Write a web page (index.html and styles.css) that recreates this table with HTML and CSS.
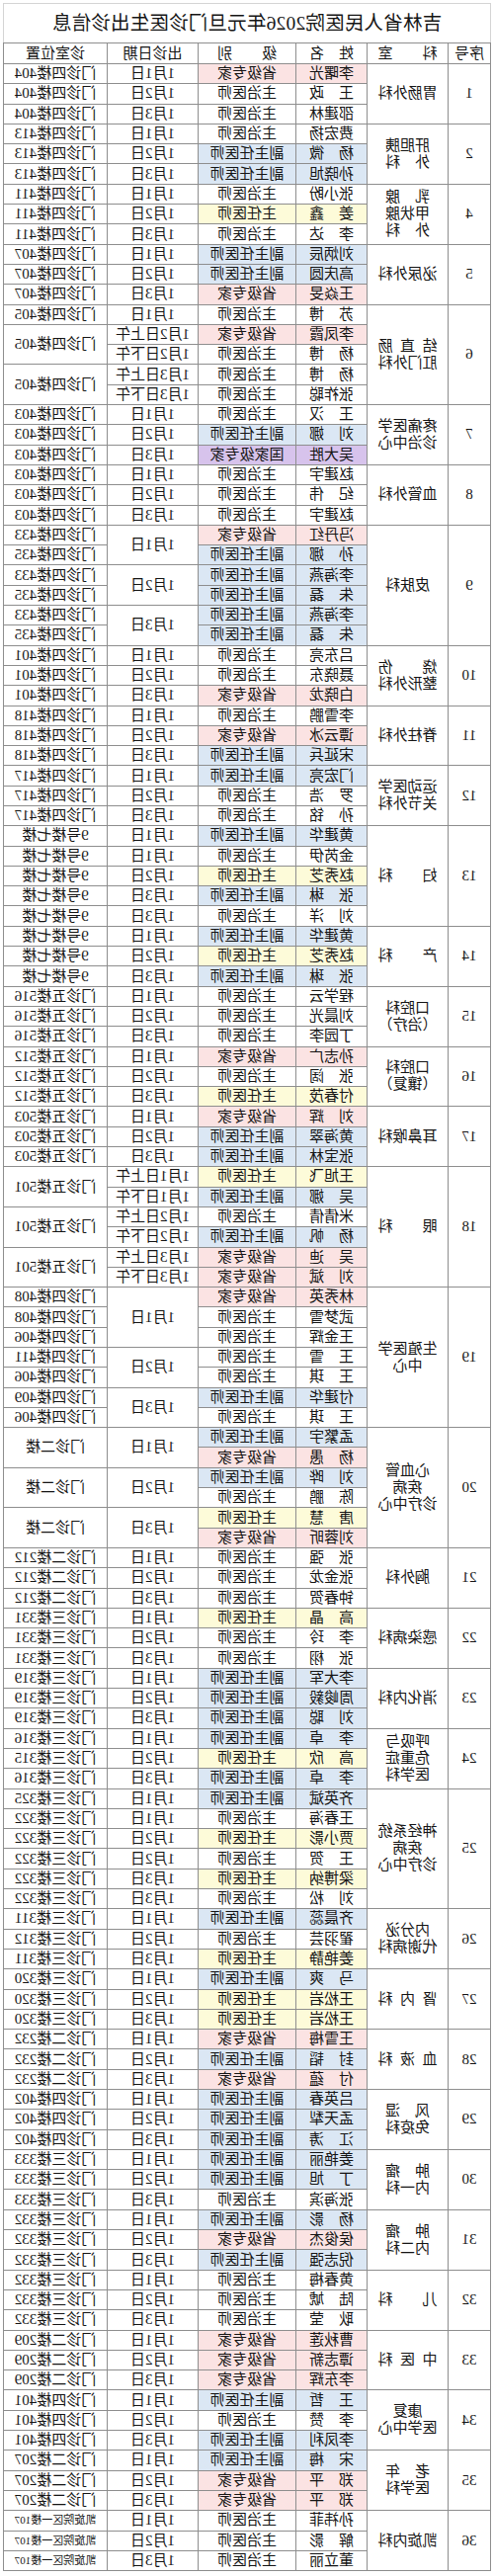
FILE: index.html
```html
<!DOCTYPE html>
<html lang="zh-CN">
<head>
<meta charset="utf-8">
<title>吉林省人民医院2026年元旦门诊医生出诊信息</title>
<link rel="stylesheet" href="styles.css">
</head>
<body>
<div class="sheet">
<table class="grid">
<colgroup><col class="c1"><col class="c2"><col class="c3"><col class="c4"><col class="c5"><col class="c6"></colgroup>
<thead>
<tr class="title"><td colspan="6">吉林省人民医院2026年元旦门诊医生出诊信息</td></tr>
<tr class="head"><th>序号</th><th>科　　室</th><th>姓　名</th><th>级　　别</th><th>出诊日期</th><th>诊室位置</th></tr>
</thead>
<tbody>
<tr><td class="no" rowspan="3">1</td><td class="dept" rowspan="3">胃肠外科</td><td class="p">李曙光</td><td class="p">省级专家</td><td>1月1日</td><td>门诊四楼404</td></tr>
<tr><td>王　政</td><td>主治医师</td><td>1月2日</td><td>门诊四楼404</td></tr>
<tr><td>邵建林</td><td>主治医师</td><td>1月3日</td><td>门诊四楼404</td></tr>

<tr><td class="no" rowspan="3">2</td><td class="dept" rowspan="3">肝胆胰<br>外　科</td><td>费宏扬</td><td>主治医师</td><td>1月1日</td><td>门诊四楼413</td></tr>
<tr><td class="b">杨　微</td><td class="b">副主任医师</td><td>1月2日</td><td>门诊四楼413</td></tr>
<tr><td class="b">孙晓旭</td><td class="b">副主任医师</td><td>1月3日</td><td>门诊四楼413</td></tr>

<tr><td class="no" rowspan="3">4</td><td class="dept" rowspan="3">乳　腺<br>甲状腺<br>外　科</td><td>张小盼</td><td>主治医师</td><td>1月1日</td><td>门诊四楼411</td></tr>
<tr><td class="y">姜　鑫</td><td class="y">主任医师</td><td>1月2日</td><td>门诊四楼411</td></tr>
<tr><td>李　达</td><td>主治医师</td><td>1月3日</td><td>门诊四楼411</td></tr>

<tr><td class="no" rowspan="3">5</td><td class="dept" rowspan="3">泌尿外科</td><td class="b">刘炳辰</td><td class="b">副主任医师</td><td>1月1日</td><td>门诊四楼407</td></tr>
<tr><td class="b">高庆圆</td><td class="b">副主任医师</td><td>1月2日</td><td>门诊四楼407</td></tr>
<tr><td class="p">王焱旻</td><td class="p">省级专家</td><td>1月3日</td><td>门诊四楼407</td></tr>

<tr><td class="no" rowspan="5">6</td><td class="dept" rowspan="5">结&ensp;直&ensp;肠<br>肛门外科</td><td>苏　博</td><td>主治医师</td><td>1月1日</td><td>门诊四楼405</td></tr>
<tr><td class="p">李凤霞</td><td class="p">省级专家</td><td>1月2日上午</td><td rowspan="2">门诊四楼405</td></tr>
<tr><td>杨　博</td><td>主治医师</td><td>1月2日下午</td></tr>
<tr><td>杨　博</td><td>主治医师</td><td>1月3日上午</td><td rowspan="2">门诊四楼405</td></tr>
<tr><td>张祚聪</td><td>主治医师</td><td>1月3日下午</td></tr>

<tr><td class="no" rowspan="3">7</td><td class="dept" rowspan="3">疼痛医学<br>诊治中心</td><td>王　汉</td><td>主治医师</td><td>1月1日</td><td>门诊四楼403</td></tr>
<tr><td class="b">刘　娜</td><td class="b">副主任医师</td><td>1月2日</td><td>门诊四楼403</td></tr>
<tr><td class="v">吴大胜</td><td class="v">国家级专家</td><td>1月3日</td><td>门诊四楼403</td></tr>

<tr><td class="no" rowspan="3">8</td><td class="dept" rowspan="3">血管外科</td><td>赵建宇</td><td>主治医师</td><td>1月1日</td><td>门诊四楼403</td></tr>
<tr><td>纪　伟</td><td>主治医师</td><td>1月2日</td><td>门诊四楼403</td></tr>
<tr><td>赵建宇</td><td>主治医师</td><td>1月3日</td><td>门诊四楼403</td></tr>

<tr><td class="no" rowspan="6">9</td><td class="dept" rowspan="6">皮肤科</td><td class="p">冯丹红</td><td class="p">省级专家</td><td rowspan="2">1月1日</td><td>门诊四楼433</td></tr>
<tr><td class="b">孙　娜</td><td class="b">副主任医师</td><td>门诊四楼435</td></tr>
<tr><td class="b">李海燕</td><td class="b">副主任医师</td><td rowspan="2">1月2日</td><td>门诊四楼433</td></tr>
<tr><td class="b">朱　磊</td><td class="b">副主任医师</td><td>门诊四楼435</td></tr>
<tr><td class="b">李海燕</td><td class="b">副主任医师</td><td rowspan="2">1月3日</td><td>门诊四楼433</td></tr>
<tr><td class="b">朱　磊</td><td class="b">副主任医师</td><td>门诊四楼435</td></tr>

<tr><td class="no" rowspan="3">10</td><td class="dept" rowspan="3">烧　　伤<br>整形外科</td><td>吕东亮</td><td>主治医师</td><td>1月1日</td><td>门诊四楼401</td></tr>
<tr><td>聂晓东</td><td>主治医师</td><td>1月2日</td><td>门诊四楼401</td></tr>
<tr><td class="p">白晓龙</td><td class="p">省级专家</td><td>1月3日</td><td>门诊四楼401</td></tr>

<tr><td class="no" rowspan="3">11</td><td class="dept" rowspan="3">脊柱外科</td><td>李雪鹏</td><td>主治医师</td><td>1月1日</td><td>门诊四楼418</td></tr>
<tr><td class="p">谭云冰</td><td class="p">省级专家</td><td>1月2日</td><td>门诊四楼418</td></tr>
<tr><td class="b">宋延兵</td><td class="b">副主任医师</td><td>1月3日</td><td>门诊四楼418</td></tr>

<tr><td class="no" rowspan="3">12</td><td class="dept" rowspan="3">运动医学<br>关节外科</td><td class="b">门宏亮</td><td class="b">副主任医师</td><td>1月1日</td><td>门诊四楼417</td></tr>
<tr><td>罗　浩</td><td>主治医师</td><td>1月2日</td><td>门诊四楼417</td></tr>
<tr><td>孙　铭</td><td>主治医师</td><td>1月3日</td><td>门诊四楼417</td></tr>

<tr><td class="no" rowspan="5">13</td><td class="dept" rowspan="5">妇　　科</td><td class="b">黄建华</td><td class="b">副主任医师</td><td>1月1日</td><td>9号楼七楼</td></tr>
<tr><td>金芮伊</td><td>主治医师</td><td>1月1日</td><td>9号楼七楼</td></tr>
<tr><td class="y">赵秀芝</td><td class="y">主任医师</td><td>1月2日</td><td>9号楼七楼</td></tr>
<tr><td class="b">张　琳</td><td class="b">副主任医师</td><td>1月3日</td><td>9号楼七楼</td></tr>
<tr><td>刘　洋</td><td>主治医师</td><td>1月3日</td><td>9号楼七楼</td></tr>

<tr><td class="no" rowspan="3">14</td><td class="dept" rowspan="3">产　　科</td><td class="b">黄建华</td><td class="b">副主任医师</td><td>1月1日</td><td>9号楼七楼</td></tr>
<tr><td class="y">赵秀芝</td><td class="y">主任医师</td><td>1月2日</td><td>9号楼七楼</td></tr>
<tr><td class="b">张　琳</td><td class="b">副主任医师</td><td>1月3日</td><td>9号楼七楼</td></tr>

<tr><td class="no" rowspan="3">15</td><td class="dept" rowspan="3">口腔科<br>（治疗）</td><td>程学云</td><td>主治医师</td><td>1月1日</td><td>门诊五楼516</td></tr>
<tr><td>刘晨光</td><td>主治医师</td><td>1月2日</td><td>门诊五楼516</td></tr>
<tr><td>丁园李</td><td>主治医师</td><td>1月3日</td><td>门诊五楼516</td></tr>

<tr><td class="no" rowspan="3">16</td><td class="dept" rowspan="3">口腔科<br>（镶复）</td><td class="p">孙志广</td><td class="p">省级专家</td><td>1月1日</td><td>门诊五楼512</td></tr>
<tr><td>张　阔</td><td>主治医师</td><td>1月2日</td><td>门诊五楼512</td></tr>
<tr><td class="y">付春茂</td><td class="y">主任医师</td><td>1月3日</td><td>门诊五楼512</td></tr>

<tr><td class="no" rowspan="3">17</td><td class="dept" rowspan="3">耳鼻喉科</td><td class="p">刘　辉</td><td class="p">省级专家</td><td>1月1日</td><td>门诊五楼503</td></tr>
<tr><td class="b">黄海翠</td><td class="b">副主任医师</td><td>1月2日</td><td>门诊五楼503</td></tr>
<tr><td class="b">张宝林</td><td class="b">副主任医师</td><td>1月3日</td><td>门诊五楼503</td></tr>

<tr><td class="no" rowspan="6">18</td><td class="dept" rowspan="6">眼　　科</td><td class="y">王旭飞</td><td class="y">主任医师</td><td>1月1日上午</td><td rowspan="2">门诊五楼501</td></tr>
<tr><td class="b">吴　娜</td><td class="b">副主任医师</td><td>1月1日下午</td></tr>
<tr><td>米倩倩</td><td>主治医师</td><td>1月2日上午</td><td rowspan="2">门诊五楼501</td></tr>
<tr><td class="b">杨　帆</td><td class="b">副主任医师</td><td>1月2日下午</td></tr>
<tr><td class="p">吴　迪</td><td class="p">省级专家</td><td>1月3日上午</td><td rowspan="2">门诊五楼501</td></tr>
<tr><td class="p">刘　斌</td><td class="p">省级专家</td><td>1月3日下午</td></tr>

<tr><td class="no" rowspan="7">19</td><td class="dept" rowspan="7">生殖医学<br>中心</td><td class="p">林秀英</td><td class="p">省级专家</td><td rowspan="3">1月1日</td><td>门诊四楼408</td></tr>
<tr><td>武梦雪</td><td>主治医师</td><td>门诊四楼408</td></tr>
<tr><td>王金辉</td><td>主治医师</td><td>门诊四楼406</td></tr>
<tr><td>王　雪</td><td>主治医师</td><td rowspan="2">1月2日</td><td>门诊四楼411</td></tr>
<tr><td>王　琪</td><td>主治医师</td><td>门诊四楼406</td></tr>
<tr><td class="b">付建华</td><td class="b">副主任医师</td><td rowspan="2">1月3日</td><td>门诊四楼409</td></tr>
<tr><td>王　琪</td><td>主治医师</td><td>门诊四楼406</td></tr>

<tr><td class="no" rowspan="6">20</td><td class="dept" rowspan="6">心血管<br>疾病<br>诊疗中心</td><td class="b">孟繁宇</td><td class="b">副主任医师</td><td rowspan="2">1月1日</td><td rowspan="2">门诊二楼</td></tr>
<tr><td class="p">杨　愚</td><td class="p">省级专家</td></tr>
<tr><td class="b">刘　晔</td><td class="b">副主任医师</td><td rowspan="2">1月2日</td><td rowspan="2">门诊二楼</td></tr>
<tr><td>陈　鹏</td><td>主治医师</td></tr>
<tr><td class="y">唐　慧</td><td class="y">主任医师</td><td rowspan="2">1月3日</td><td rowspan="2">门诊二楼</td></tr>
<tr><td class="p">刘蓉昕</td><td class="p">省级专家</td></tr>

<tr><td class="no" rowspan="3">21</td><td class="dept" rowspan="3">胸外科</td><td>张　强</td><td>主治医师</td><td>1月1日</td><td>门诊二楼212</td></tr>
<tr><td>张金龙</td><td>主治医师</td><td>1月2日</td><td>门诊二楼212</td></tr>
<tr><td>钟春贺</td><td>主治医师</td><td>1月3日</td><td>门诊二楼212</td></tr>

<tr><td class="no" rowspan="3">22</td><td class="dept" rowspan="3">感染病科</td><td class="y">高　晶</td><td class="y">主任医师</td><td>1月1日</td><td>门诊三楼331</td></tr>
<tr><td>李　玲</td><td>主治医师</td><td>1月2日</td><td>门诊三楼331</td></tr>
<tr><td>张　栩</td><td>主治医师</td><td>1月3日</td><td>门诊三楼331</td></tr>

<tr><td class="no" rowspan="3">23</td><td class="dept" rowspan="3">消化内科</td><td class="b">李大军</td><td class="b">副主任医师</td><td>1月1日</td><td>门诊三楼319</td></tr>
<tr><td class="b">周峻毅</td><td class="b">副主任医师</td><td>1月2日</td><td>门诊三楼319</td></tr>
<tr><td class="b">刘　聪</td><td class="b">副主任医师</td><td>1月3日</td><td>门诊三楼319</td></tr>

<tr><td class="no" rowspan="3">24</td><td class="dept" rowspan="3">呼吸与<br>危重症<br>医学科</td><td class="b">李　卓</td><td class="b">副主任医师</td><td>1月1日</td><td>门诊三楼316</td></tr>
<tr><td class="y">高　欣</td><td class="y">主任医师</td><td>1月2日</td><td>门诊三楼315</td></tr>
<tr><td class="b">李　卓</td><td class="b">副主任医师</td><td>1月3日</td><td>门诊三楼316</td></tr>

<tr><td class="no" rowspan="6">25</td><td class="dept" rowspan="6">神经系统<br>疾病<br>诊疗中心</td><td class="b">齐英斌</td><td class="b">副主任医师</td><td>1月1日</td><td>门诊三楼325</td></tr>
<tr><td>王春海</td><td>主治医师</td><td>1月1日</td><td>门诊三楼322</td></tr>
<tr><td class="y">贾小影</td><td class="y">主任医师</td><td>1月2日</td><td>门诊三楼322</td></tr>
<tr><td>王　贺</td><td>主治医师</td><td>1月2日</td><td>门诊三楼322</td></tr>
<tr><td class="y">梁博纳</td><td class="y">主任医师</td><td>1月3日</td><td>门诊三楼322</td></tr>
<tr><td>刘　松</td><td>主治医师</td><td>1月3日</td><td>门诊三楼322</td></tr>

<tr><td class="no" rowspan="3">26</td><td class="dept" rowspan="3">内分泌<br>代谢病科</td><td class="b">齐晨蕊</td><td class="b">副主任医师</td><td>1月1日</td><td>门诊三楼311</td></tr>
<tr><td>翟羽芸</td><td>主治医师</td><td>1月2日</td><td>门诊三楼312</td></tr>
<tr><td class="y">姜艳静</td><td class="y">主任医师</td><td>1月3日</td><td>门诊三楼311</td></tr>

<tr><td class="no" rowspan="3">27</td><td class="dept" rowspan="3">肾&ensp;内&ensp;科</td><td class="b">马　爽</td><td class="b">副主任医师</td><td>1月1日</td><td>门诊三楼320</td></tr>
<tr><td class="y">王松岩</td><td class="y">主任医师</td><td>1月2日</td><td>门诊三楼320</td></tr>
<tr><td class="y">王松岩</td><td class="y">主任医师</td><td>1月3日</td><td>门诊三楼320</td></tr>

<tr><td class="no" rowspan="3">28</td><td class="dept" rowspan="3">血&ensp;液&ensp;科</td><td class="p">王雪梅</td><td class="p">省级专家</td><td>1月1日</td><td>门诊二楼232</td></tr>
<tr><td class="b">封　韬</td><td class="b">副主任医师</td><td>1月2日</td><td>门诊二楼232</td></tr>
<tr><td class="p">付　蕴</td><td class="p">省级专家</td><td>1月3日</td><td>门诊二楼232</td></tr>

<tr><td class="no" rowspan="3">29</td><td class="dept" rowspan="3">风　湿<br>免疫科</td><td class="b">吕英春</td><td class="b">副主任医师</td><td>1月1日</td><td>门诊四楼402</td></tr>
<tr><td class="b">孟天犁</td><td class="b">副主任医师</td><td>1月2日</td><td>门诊四楼402</td></tr>
<tr><td class="b">江　涛</td><td class="b">副主任医师</td><td>1月3日</td><td>门诊四楼402</td></tr>

<tr><td class="no" rowspan="3">30</td><td class="dept" rowspan="3">肿　瘤<br>内一科</td><td class="b">姜艳丽</td><td class="b">副主任医师</td><td>1月1日</td><td>门诊三楼333</td></tr>
<tr><td class="b">丁　旭</td><td class="b">副主任医师</td><td>1月2日</td><td>门诊三楼333</td></tr>
<tr><td>张海滨</td><td>主治医师</td><td>1月3日</td><td>门诊三楼333</td></tr>

<tr><td class="no" rowspan="3">31</td><td class="dept" rowspan="3">肿　瘤<br>内二科</td><td class="b">杨　影</td><td class="b">副主任医师</td><td>1月1日</td><td>门诊三楼332</td></tr>
<tr><td class="p">侯俊杰</td><td class="p">省级专家</td><td>1月2日</td><td>门诊三楼332</td></tr>
<tr><td class="b">倪志强</td><td class="b">副主任医师</td><td>1月3日</td><td>门诊三楼332</td></tr>

<tr><td class="no" rowspan="3">32</td><td class="dept" rowspan="3">儿　　科</td><td>黄春梅</td><td>主治医师</td><td>1月1日</td><td>门诊三楼332</td></tr>
<tr><td>陆　虓</td><td>主治医师</td><td>1月2日</td><td>门诊三楼332</td></tr>
<tr><td>耿　莹</td><td>主治医师</td><td>1月3日</td><td>门诊三楼332</td></tr>

<tr><td class="no" rowspan="3">33</td><td class="dept" rowspan="3">中&ensp;医&ensp;科</td><td class="p">曹秋莲</td><td class="p">省级专家</td><td>1月1日</td><td>门诊二楼209</td></tr>
<tr><td class="p">谭志新</td><td class="p">省级专家</td><td>1月2日</td><td>门诊二楼209</td></tr>
<tr><td class="p">李东辉</td><td class="p">省级专家</td><td>1月3日</td><td>门诊二楼209</td></tr>

<tr><td class="no" rowspan="3">34</td><td class="dept" rowspan="3">康复<br>医学中心</td><td class="b">王　哲</td><td class="b">副主任医师</td><td>1月1日</td><td>门诊四楼401</td></tr>
<tr><td>李　赞</td><td>主治医师</td><td>1月2日</td><td>门诊四楼401</td></tr>
<tr><td class="b">李凤利</td><td class="b">副主任医师</td><td>1月3日</td><td>门诊四楼401</td></tr>

<tr><td class="no" rowspan="3">35</td><td class="dept" rowspan="3">老　年<br>医学科</td><td class="b">宋　梅</td><td class="b">副主任医师</td><td>1月1日</td><td>门诊二楼207</td></tr>
<tr><td class="p">郑　平</td><td class="p">省级专家</td><td>1月2日</td><td>门诊二楼207</td></tr>
<tr><td class="p">郑　平</td><td class="p">省级专家</td><td>1月3日</td><td>门诊二楼207</td></tr>

<tr><td class="no" rowspan="3">36</td><td class="dept" rowspan="3">凯旋内科</td><td>孙祎菲</td><td>主治医师</td><td>1月1日</td><td class="small">凯旋院区一楼107</td></tr>
<tr><td>解　影</td><td>主治医师</td><td>1月2日</td><td class="small">凯旋院区一楼107</td></tr>
<tr><td>董立丽</td><td>主治医师</td><td>1月3日</td><td class="small">凯旋院区一楼107</td></tr>
</tbody>
</table>
</div>
</body>
</html>
```

FILE: styles.css
```css
html, body {
  margin: 0;
  padding: 0;
  background: #ffffff;
}

.sheet {
  width: 500px;
  transform: scaleX(-1);
  font-family: "Liberation Serif", "Noto Sans CJK SC", serif;
  color: #151515;
}

.grid {
  border-collapse: collapse;
  table-layout: fixed;
  width: 493px;
  margin: 3px 0 0 3px;
}

.c1 { width: 43px; }
.c2 { width: 82px; }
.c3 { width: 72px; }
.c4 { width: 99px; }
.c5 { width: 92px; }
.c6 { width: 105px; }

.grid td,
.grid th {
  border: 1px solid #8e8e8e;
  padding: 0;
  text-align: center;
  vertical-align: middle;
  font-size: 15px;
  line-height: 17px;
  font-weight: normal;
  white-space: nowrap;
  overflow: hidden;
}

.grid .title td {
  height: 39px;
  font-size: 19.5px;
  border-color: #d4d4d4;
  border-bottom-color: #8e8e8e;
  letter-spacing: 0.2px;
}

.grid .head th {
  height: 20px;
}

.grid tbody tr {
  height: 20.3px;
}

.grid .no {
  font-size: 15px;
}

.grid .dept {
  line-height: 17px;
}

.grid .small {
  font-size: 11px;
}

.grid .p { background: #fbe3e3; }
.grid .b { background: #dbe7f4; }
.grid .y { background: #fdfbd9; }
.grid .v { background: #d7c3ec; }
```
